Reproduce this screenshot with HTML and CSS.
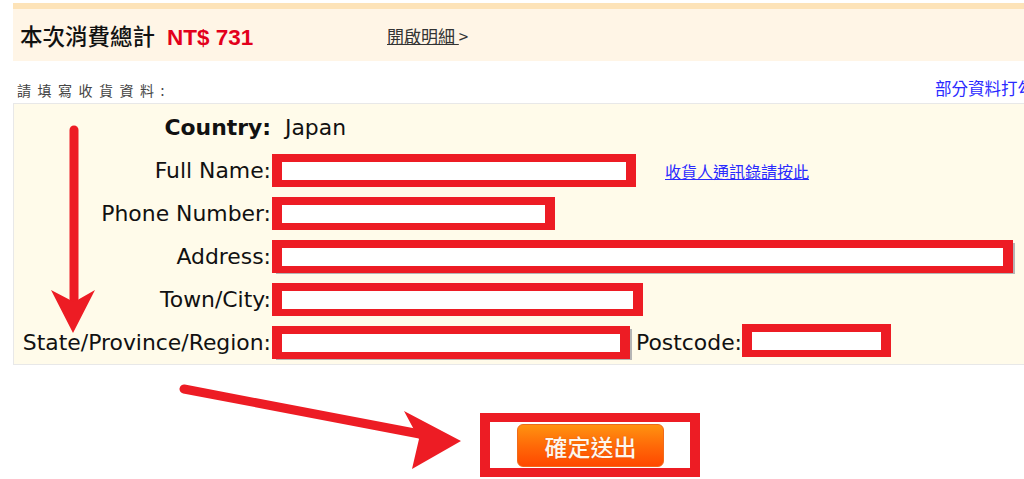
FILE: index.html
```html
<!DOCTYPE html>
<html lang="zh-Hant">
<head>
    <meta charset="UTF-8">
    <title>確認收貨資料</title>
    <link rel="stylesheet" href="styles.css">
</head>
<body>

<div class="page">

    <div class="summary">
        <div class="total">本次消費總計<span class="price">NT$ 731</span></div>
        <a class="detail" href="#"><u>開啟明細 </u>&gt;</a>
    </div>

    <div class="hint-row">
        <span class="hint">請填寫收貨資料:</span>
        <a class="hint-link" href="#">部分資料打勾</a>
    </div>

    <div class="form-box">
        <div class="label strong">Country:</div>
        <div class="value"><span class="country">Japan</span></div>

        <div class="label">Full Name:</div>
        <div class="value">
            <span class="field w-name"></span>
            <a class="book" href="#">收貨人通訊錄請按此</a>
        </div>

        <div class="label">Phone Number:</div>
        <div class="value"><span class="field w-phone"></span></div>

        <div class="label">Address:</div>
        <div class="value"><span class="field w-address behind"></span></div>

        <div class="label">Town/City:</div>
        <div class="value"><span class="field w-town"></span></div>

        <div class="label">State/Province/Region:</div>
        <div class="value">
            <span class="field w-state behind"></span>
            <span class="post-label">Postcode:</span>
            <span class="field w-post"></span>
        </div>
    </div>

    <div class="actions">
        <div class="mark">
            <button class="submit" type="button">確定送出</button>
        </div>
    </div>

    <!-- red annotation arrows drawn over the page -->
    <svg class="arrows" width="1024" height="479" viewBox="0 0 1024 479">
        <line x1="74" y1="127" x2="74" y2="296" stroke="#ed1c24" stroke-width="9" stroke-linecap="round"/>
        <polygon points="51,287 74,299 95,287 73,330" fill="#ed1c24"/>
        <line x1="184" y1="386" x2="425" y2="432" stroke="#ed1c24" stroke-width="9" stroke-linecap="round"/>
        <polygon points="404,408 461,438 412,466 419,436" fill="#ed1c24"/>
    </svg>

</div>

</body>
</html>
```

FILE: styles.css
```css
body {
    margin:     0;
    overflow:   hidden;
    background: #fff;
    font-family: "DejaVu Sans", sans-serif;
}
.page {
    position:   relative;
    width:      1100px;
    padding-left: 13px;
}

/* order total band */
.summary {
    margin-top: 3px;
    border-top: 6px solid #fde3b8;
    background: #fff5e6;
    height:     52px;
    display:    flex;
    align-items: center;
    padding-left: 7px;
}
.total {
    width:      367px;
    font:       500 22.5px "Noto Sans CJK TC", sans-serif;
    color:      #111;
}
.price {
    margin-left: 12px;
    font:       bold 22.5px "Liberation Sans", sans-serif;
    color:      #e3001b;
}
.detail {
    font:       17px "Noto Sans CJK TC", "Liberation Sans", sans-serif;
    color:      #333;
    text-decoration: none;
}

/* "please fill in" line */
.hint-row {
    height:     42px;
    display:    grid;
    grid-template-columns: 918px auto;
    align-items: end;
    padding-left: 4px;
    padding-bottom: 3px;
    box-sizing: border-box;
    line-height: 20px;
    white-space: nowrap;
}
.hint {
    font:       14px "Noto Sans CJK TC", sans-serif;
    letter-spacing: 6.5px;
    color:      #444;
}
.hint-link {
    font:       16.5px "Noto Sans CJK TC", sans-serif;
    color:      #2a2aff;
    text-decoration: none;
}

/* address form */
.form-box {
    border:     1px solid #e8e8e8;
    background: #fffbea;
    padding-top: 2px;
    display:    grid;
    grid-template-columns: 258px 1fr;
    grid-auto-rows: 43px;
    align-items: center;
    font-size:  21.9px;
    color:      #111;
}
.label {
    text-align: right;
    padding-right: 1px;
    white-space: nowrap;
}
.label.strong {
    font-weight: bold;
}
.value {
    display:    flex;
    align-items: center;
    white-space: nowrap;
}
.country {
    margin-left: 13px;
}
.field {
    display:    block;
    height:     33px;
    box-sizing: border-box;
    border:     9px solid #ed1c24;
    border-width: 8px 10px 7px 10px;
    background: #fff;
}
.field.behind {
    box-shadow: 3px 2px 0 -1px #b5b5b5;
}
.w-name    { width: 364px; }
.w-phone   { width: 283px; }
.w-address { width: 741px; }
.w-town    { width: 371px; }
.w-state   { width: 358px; }
.w-post    { width: 149px; margin-top: -4px; }
.book {
    margin-left: 29px;
    font:       16px "Noto Sans CJK TC", sans-serif;
    color:      #2a2aff;
}
.post-label {
    margin-left: 6px;
}

/* submit */
.actions {
    padding:    48px 0 0 467px;
}
.mark {
    width:      220px;
    height:     64px;
    box-sizing: border-box;
    border:     10px solid #ed1c24;
    border-width: 9px 10px 9px 10px;
    background: #fff;
    padding:    2px 0 0 27px;
}
.submit {
    display:    block;
    width:      147px;
    height:     43px;
    border:     1px solid #f06a1a;
    border-radius: 6px;
    background: linear-gradient(#ff9210, #ff6a08 50%, #ff4800);
    color:      #fff6ec;
    font:       500 23px "Noto Sans CJK TC", sans-serif;
    text-shadow: 0 0 1px rgba(160, 50, 0, 0.6);
    padding:    0;
}

.arrows {
    position:   absolute;
    left:       0;
    top:        0;
    pointer-events: none;
}
```
